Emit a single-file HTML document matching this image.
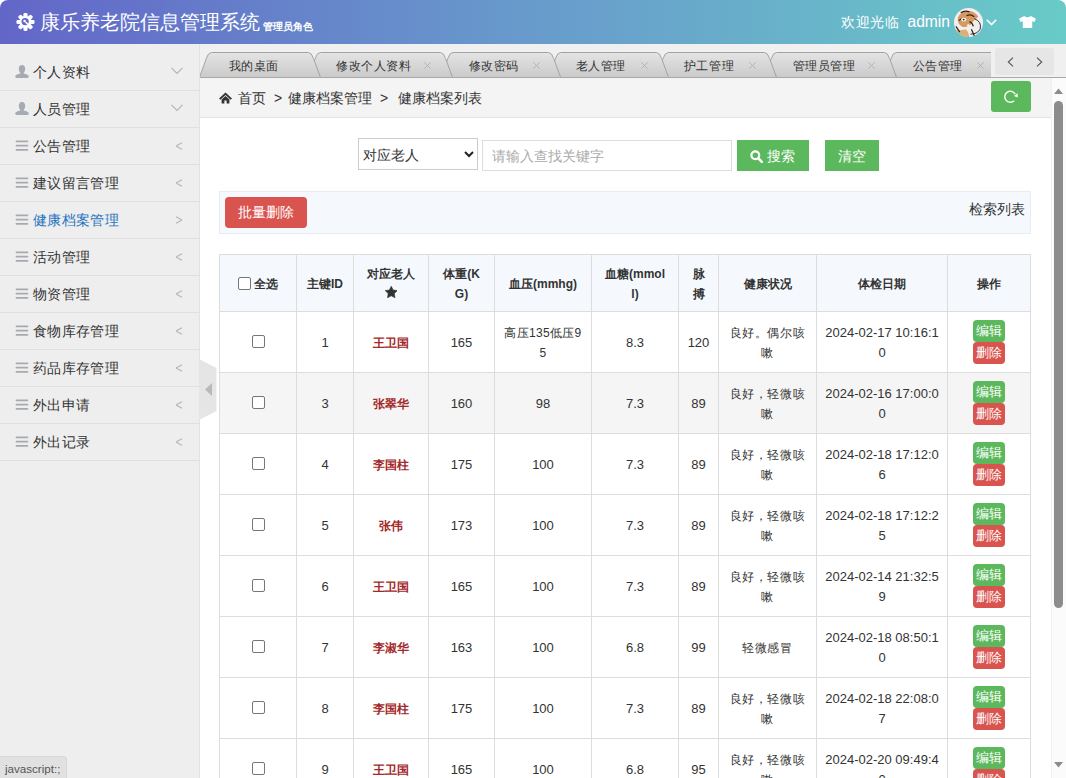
<!DOCTYPE html>
<html><head><meta charset="utf-8">
<style>
*{box-sizing:border-box;margin:0;padding:0}
html,body{width:1066px;height:778px;overflow:hidden;background:#fff;font-family:"Liberation Sans",sans-serif;color:#333;font-size:14px}
#hd{position:absolute;left:0;top:0;width:1066px;height:44px;border-radius:8px 8px 0 0;background:linear-gradient(90deg,#6366c8 0%,#689bcc 50%,#68cbc7 100%);color:#fff}
#hd .logo{position:absolute;left:16px;top:12px;width:19px;height:20px}
#hd .title{position:absolute;left:40px;top:9px;font-size:20px;line-height:26px;white-space:nowrap}
#hd .title small{font-size:10px;font-weight:bold;margin-left:3px;position:relative;top:1px}
#hd .welcome{position:absolute;left:841px;top:13px;font-size:14px;letter-spacing:0.6px;line-height:18px;white-space:nowrap}
#hd .uname{position:absolute;left:907.5px;top:12px;font-size:15.6px;line-height:20px}
#hd .avatar{position:absolute;left:954px;top:8px;width:30px;height:30px}
#hd .caret{position:absolute;left:986px;top:19px;width:11px;height:7px}
#hd .shirt{position:absolute;left:1019px;top:16px;width:17px;height:12px}

#sb{position:absolute;left:0;top:44px;width:200px;height:734px;background:#eeeeee;border-right:1px solid #e2e2e2}
#sb ul{list-style:none;position:absolute;left:0;top:10px;width:199px}
#sb li{position:relative;height:37px;border-bottom:1px solid #e0e0e0;font-size:14px;letter-spacing:0.35px;line-height:36px;color:#333;padding-left:33px;white-space:nowrap}
#sb li.on{color:#1e73be}
#sb li svg{position:absolute}
#sb li .ic{left:15px;top:11px;width:14px;height:14px}
#sb li .ic.u{top:11px}
#sb li .ar{left:171px;top:13px;width:12px;height:8px}
#sb li .lt{left:175px;top:14px;width:8px;height:8px}

#handle{position:absolute;z-index:10;left:199px;top:359px;width:18px;height:61px}

#tabs{position:absolute;left:200px;top:44px;width:866px;height:34px;background:#f0f0f0}
#tabs svg.bar{position:absolute;left:0;top:0}
.tt{position:absolute;top:13px;font-size:12.25px;letter-spacing:0.55px;line-height:18px;color:#333;white-space:nowrap}
.tx{position:absolute;top:18px;width:7px;height:7px}
#tabnav{position:absolute;left:795px;top:4px;width:59px;height:27px;background:#e6e6e6;border-radius:3px}

#frame{position:absolute;left:200px;top:78px;width:866px;height:700px;background:#fff;overflow:hidden}
#crumb{position:absolute;left:0;top:0;width:851px;height:40px;background:#f4f4f4;border-bottom:1px solid #e4e4e4;font-size:14px;line-height:18px;color:#333;white-space:nowrap}
#crumb .home{position:absolute;left:19px;top:14px;width:13px;height:12px}
#crumb span{position:absolute;top:11px}
#refresh{position:absolute;left:791px;top:3px;width:40px;height:31px;background:#5cb85c;border-radius:3px}
#refresh svg{position:absolute;left:12px;top:8px}
#scroll{position:absolute;left:851px;top:0;width:15px;height:700px;background:#fbfbfb;border-left:1px solid #f0f0f0}
#scroll .up{position:absolute;left:2px;top:10px}
#scroll .dn{position:absolute;left:2px;top:684px}
#scroll .th{position:absolute;left:2px;top:23px;width:9px;height:507px;background:#8c8c8c;border-radius:5px}

#sel{position:absolute;left:158px;top:60px;width:120px;height:32px;border:1px solid #ccc;background:#fff;font-size:14px;line-height:18px;color:#333}
#sel span{position:absolute;left:4px;top:7px}
#sel svg{position:absolute;left:105px;top:12px}
#inp{position:absolute;left:282px;top:62px;width:250px;height:31px;border:1px solid #ddd;background:#fff;font-size:14px;line-height:18px;color:#aaa}
#inp span{position:absolute;left:9px;top:6px}
.gbtn{position:absolute;top:62px;height:31px;background:#5cb85c;color:#fff;font-size:14px;line-height:18px}
.gbtn span{position:absolute;top:7px}
#sbtn{left:537px;width:72px}
#cbtn{left:625px;width:54px}

#bar{position:absolute;left:19px;top:113px;width:812px;height:43px;background:#f5f9fd;border:1px solid #e6ecf1}
#bdel{position:absolute;left:5px;top:5px;width:82px;height:31px;background:#d9534f;border-radius:4px;color:#fff;font-size:14px;line-height:18px}
#bdel span{position:absolute;left:13px;top:6px}
#bar .right{position:absolute;left:749px;top:8px;font-size:14px;line-height:18px;color:#333}

table{position:absolute;left:19px;top:176px;width:811px;border-collapse:collapse;table-layout:fixed;font-size:12px;color:#333}
th,td{border:1px solid #ddd;text-align:center;vertical-align:middle;padding:0 2px;line-height:20px;white-space:nowrap}
th{height:57px;background:#f5f9fd;font-weight:bold;padding-top:2px}
td{height:61px;font-size:13px;padding-top:2px}
td.zh{font-size:12px;letter-spacing:0.65px}
tr.hv td{background:#f5f5f5}
td.nm{color:#a3292b;font-weight:bold;font-size:12.4px}
i.cb{display:inline-block;width:13px;height:13px;border:1px solid #767676;border-radius:2px;background:#fff;vertical-align:middle;position:relative;top:-2px}
th i.cb{top:-1px;margin-right:3px}
b.be,b.bd{display:block;width:32px;height:22px;margin:0 auto;border-radius:4px;color:#fff;font-size:12.5px;line-height:22px;font-weight:normal;position:relative;left:0;top:-1px}
b.be{background:#5cb85c;margin-top:0}
b.bd{background:#d9534f;margin-top:0}
.star{display:block;margin:2px auto 6px;width:12.5px;height:12px}

#status{position:absolute;left:0;top:756px;width:67px;height:22px;background:#e1e1e1;border-top:1px solid #d8d8d8;border-right:1px solid #d8d8d8;border-radius:0 4px 0 0;font-size:11.6px;line-height:18px;color:#555;padding-left:5px;padding-top:3px}
</style></head><body>

<div id="hd">
  <svg class="logo" viewBox="0 0 20 20"><g fill="#fff"><g transform="translate(10 10)">
   <rect x="-2.2" y="-9.5" width="4.4" height="5" rx="1.5"/>
   <rect x="-2.2" y="-9.5" width="4.4" height="5" rx="1.5" transform="rotate(45)"/>
   <rect x="-2.2" y="-9.5" width="4.4" height="5" rx="1.5" transform="rotate(90)"/>
   <rect x="-2.2" y="-9.5" width="4.4" height="5" rx="1.5" transform="rotate(135)"/>
   <rect x="-2.2" y="-9.5" width="4.4" height="5" rx="1.5" transform="rotate(180)"/>
   <rect x="-2.2" y="-9.5" width="4.4" height="5" rx="1.5" transform="rotate(225)"/>
   <rect x="-2.2" y="-9.5" width="4.4" height="5" rx="1.5" transform="rotate(270)"/>
   <rect x="-2.2" y="-9.5" width="4.4" height="5" rx="1.5" transform="rotate(315)"/>
   <circle r="6.3"/></g>
   <circle cx="9.6" cy="9.6" r="3.8" fill="#6466c8"/><circle cx="9" cy="9" r="1.3" fill="#fff"/><path d="M10 10 L14 14" stroke="#fff" stroke-width="1.6"/></g></svg>
  <div class="title">康乐养老院信息管理系统<small>管理员角色</small></div>
  <div class="welcome">欢迎光临</div>
  <div class="uname">admin</div>
  <svg class="avatar" viewBox="0 0 31 31"><defs><clipPath id="av"><circle cx="15" cy="15" r="15"/></clipPath></defs>
   <g clip-path="url(#av)"><rect width="31" height="31" fill="#f1eef0"/>
   <path d="M4 10 Q7 3 14 3 Q22 3 25 9 Q21 12 18 16 Q14 21 8 19 Q3 16 4 10Z" fill="#d49a62"/>
   <path d="M0 22 Q6 24 12 22 Q15 24 16 31 H0Z" fill="#dcae78"/>
   <path d="M7 5 Q11 2 16 4 M13 8 Q17 6 21 9 M5 13 Q8 10 11 12 M16 14 Q19 15 20 19 M18 22 L22 31 M2 19 L6 25" stroke="#3c2414" stroke-width="1.3" fill="none"/>
   <path d="M21 11 Q29 14 27 22 Q24 27 17 27" stroke="#2a2a2a" stroke-width="1" fill="none"/>
   <ellipse cx="10" cy="12" rx="2.6" ry="2" fill="#fff"/><circle cx="10" cy="12" r="1" fill="#222"/>
   <path d="M14 17 Q17 20 15 24" stroke="#f6efe6" stroke-width="2.2" fill="none"/>
   </g></svg>
  <svg class="caret" viewBox="0 0 11 7"><path d="M0.8 0.8 L5.5 5.6 L10.2 0.8" stroke="#fff" stroke-width="1.6" fill="none"/></svg>
  <svg class="shirt" viewBox="0 0 17 12"><path d="M0 2.8 L5.2 0 Q8.5 2.6 11.8 0 L17 2.8 L15.4 6 L13.2 5.2 L13.2 12 L3.8 12 L3.8 5.2 L1.6 6 Z" fill="#fff"/></svg>
</div>

<div id="sb">
  <ul>
    <li><svg class="ic" viewBox="0 0 14 14"><path d="M7 0 C9.3 0 10.2 1.8 10.2 4 C10.2 5.9 9.3 7.2 8.7 7.7 L8.7 8.4 C11.5 8.9 13.8 9.9 13.8 11.6 Q13.8 13 12.4 13 L1.6 13 Q0.2 13 0.2 11.6 C0.2 9.9 2.5 8.9 5.3 8.4 L5.3 7.7 C4.7 7.2 3.8 5.9 3.8 4 C3.8 1.8 4.7 0 7 0Z" fill="#a5aab3"/></svg><svg class="ar" viewBox="0 0 12 8"><path d="M0.5 0.8 L6 6.5 L11.5 0.8" stroke="#b5b5b5" stroke-width="1.2" fill="none"/></svg>个人资料</li>
    <li><svg class="ic" viewBox="0 0 14 14"><path d="M7 0 C9.3 0 10.2 1.8 10.2 4 C10.2 5.9 9.3 7.2 8.7 7.7 L8.7 8.4 C11.5 8.9 13.8 9.9 13.8 11.6 Q13.8 13 12.4 13 L1.6 13 Q0.2 13 0.2 11.6 C0.2 9.9 2.5 8.9 5.3 8.4 L5.3 7.7 C4.7 7.2 3.8 5.9 3.8 4 C3.8 1.8 4.7 0 7 0Z" fill="#a5aab3"/></svg><svg class="ar" viewBox="0 0 12 8"><path d="M0.5 0.8 L6 6.5 L11.5 0.8" stroke="#b5b5b5" stroke-width="1.2" fill="none"/></svg>人员管理</li>
    <li><svg class="ic" viewBox="0 0 14 14"><rect x="0.6" y="1.6" width="12.7" height="1.75" rx="0.8" fill="#a6aaaf"/><rect x="0.6" y="5.8" width="12.7" height="1.75" rx="0.8" fill="#a6aaaf"/><rect x="0.6" y="10" width="12.7" height="1.75" rx="0.8" fill="#a6aaaf"/></svg><svg class="lt" viewBox="0 0 8 8"><path d="M1 4 L7 0.8 M1 4 L7 7.2" stroke="#b5b5b5" stroke-width="1.1" fill="none"/></svg>公告管理</li>
    <li><svg class="ic" viewBox="0 0 14 14"><rect x="0.6" y="1.6" width="12.7" height="1.75" rx="0.8" fill="#a6aaaf"/><rect x="0.6" y="5.8" width="12.7" height="1.75" rx="0.8" fill="#a6aaaf"/><rect x="0.6" y="10" width="12.7" height="1.75" rx="0.8" fill="#a6aaaf"/></svg><svg class="lt" viewBox="0 0 8 8"><path d="M1 4 L7 0.8 M1 4 L7 7.2" stroke="#b5b5b5" stroke-width="1.1" fill="none"/></svg>建议留言管理</li>
    <li class="on"><svg class="ic" viewBox="0 0 14 14"><rect x="0.6" y="1.6" width="12.7" height="1.75" rx="0.8" fill="#a6aaaf"/><rect x="0.6" y="5.8" width="12.7" height="1.75" rx="0.8" fill="#a6aaaf"/><rect x="0.6" y="10" width="12.7" height="1.75" rx="0.8" fill="#a6aaaf"/></svg><svg class="lt" viewBox="0 0 8 8"><path d="M7 4 L1 0.8 M7 4 L1 7.2" stroke="#b5b5b5" stroke-width="1.1" fill="none"/></svg>健康档案管理</li>
    <li><svg class="ic" viewBox="0 0 14 14"><rect x="0.6" y="1.6" width="12.7" height="1.75" rx="0.8" fill="#a6aaaf"/><rect x="0.6" y="5.8" width="12.7" height="1.75" rx="0.8" fill="#a6aaaf"/><rect x="0.6" y="10" width="12.7" height="1.75" rx="0.8" fill="#a6aaaf"/></svg><svg class="lt" viewBox="0 0 8 8"><path d="M1 4 L7 0.8 M1 4 L7 7.2" stroke="#b5b5b5" stroke-width="1.1" fill="none"/></svg>活动管理</li>
    <li><svg class="ic" viewBox="0 0 14 14"><rect x="0.6" y="1.6" width="12.7" height="1.75" rx="0.8" fill="#a6aaaf"/><rect x="0.6" y="5.8" width="12.7" height="1.75" rx="0.8" fill="#a6aaaf"/><rect x="0.6" y="10" width="12.7" height="1.75" rx="0.8" fill="#a6aaaf"/></svg><svg class="lt" viewBox="0 0 8 8"><path d="M1 4 L7 0.8 M1 4 L7 7.2" stroke="#b5b5b5" stroke-width="1.1" fill="none"/></svg>物资管理</li>
    <li><svg class="ic" viewBox="0 0 14 14"><rect x="0.6" y="1.6" width="12.7" height="1.75" rx="0.8" fill="#a6aaaf"/><rect x="0.6" y="5.8" width="12.7" height="1.75" rx="0.8" fill="#a6aaaf"/><rect x="0.6" y="10" width="12.7" height="1.75" rx="0.8" fill="#a6aaaf"/></svg><svg class="lt" viewBox="0 0 8 8"><path d="M1 4 L7 0.8 M1 4 L7 7.2" stroke="#b5b5b5" stroke-width="1.1" fill="none"/></svg>食物库存管理</li>
    <li><svg class="ic" viewBox="0 0 14 14"><rect x="0.6" y="1.6" width="12.7" height="1.75" rx="0.8" fill="#a6aaaf"/><rect x="0.6" y="5.8" width="12.7" height="1.75" rx="0.8" fill="#a6aaaf"/><rect x="0.6" y="10" width="12.7" height="1.75" rx="0.8" fill="#a6aaaf"/></svg><svg class="lt" viewBox="0 0 8 8"><path d="M1 4 L7 0.8 M1 4 L7 7.2" stroke="#b5b5b5" stroke-width="1.1" fill="none"/></svg>药品库存管理</li>
    <li><svg class="ic" viewBox="0 0 14 14"><rect x="0.6" y="1.6" width="12.7" height="1.75" rx="0.8" fill="#a6aaaf"/><rect x="0.6" y="5.8" width="12.7" height="1.75" rx="0.8" fill="#a6aaaf"/><rect x="0.6" y="10" width="12.7" height="1.75" rx="0.8" fill="#a6aaaf"/></svg><svg class="lt" viewBox="0 0 8 8"><path d="M1 4 L7 0.8 M1 4 L7 7.2" stroke="#b5b5b5" stroke-width="1.1" fill="none"/></svg>外出申请</li>
    <li><svg class="ic" viewBox="0 0 14 14"><rect x="0.6" y="1.6" width="12.7" height="1.75" rx="0.8" fill="#a6aaaf"/><rect x="0.6" y="5.8" width="12.7" height="1.75" rx="0.8" fill="#a6aaaf"/><rect x="0.6" y="10" width="12.7" height="1.75" rx="0.8" fill="#a6aaaf"/></svg><svg class="lt" viewBox="0 0 8 8"><path d="M1 4 L7 0.8 M1 4 L7 7.2" stroke="#b5b5b5" stroke-width="1.1" fill="none"/></svg>外出记录</li>
  </ul>
</div>
<svg id="handle" viewBox="0 0 18 61"><path d="M0 0 L17.5 9 L17.5 52 L0 61Z" fill="#e5e5e5"/><path d="M13 24 L6 30.5 L13 37Z" fill="#b9b9b9"/></svg>

<div id="tabs">
  <svg class="bar" width="866" height="34" viewBox="0 0 866 34">
   <defs><linearGradient id="tg" x1="0" y1="0" x2="0" y2="1"><stop offset="0" stop-color="#e4e4e4"/><stop offset="1" stop-color="#cacaca"/></linearGradient>
   <clipPath id="tc"><rect x="0" y="0" width="791" height="34"/></clipPath></defs>
   <g clip-path="url(#tc)" fill="url(#tg)" stroke="#a3a3a3" stroke-width="1">
   <path d="M684.2 33.5 L691.1 14.5 Q692.9 8.5 696.3 8.5 L807.8 8.5 Q811.2 8.5 813.0 14.5 L820.0 33.5"/>
   <path d="M564.4 33.5 L571.3 14.5 Q573.1 8.5 576.5 8.5 L684.4 8.5 Q687.8 8.5 689.6 14.5 L696.6 33.5"/>
   <path d="M456.2 33.5 L463.1 14.5 Q464.9 8.5 468.3 8.5 L564.4 8.5 Q567.8 8.5 569.6 14.5 L576.6 33.5"/>
   <path d="M348.6 33.5 L355.5 14.5 Q357.3 8.5 360.7 8.5 L456.4 8.5 Q459.8 8.5 461.6 14.5 L468.6 33.5"/>
   <path d="M240.9 33.5 L247.8 14.5 Q249.6 8.5 253.0 8.5 L348.5 8.5 Q351.9 8.5 353.7 14.5 L360.7 33.5"/>
   <path d="M108.3 33.5 L115.2 14.5 Q117.0 8.5 120.4 8.5 L240.4 8.5 Q243.8 8.5 245.6 14.5 L252.6 33.5"/>
   <path d="M-0.6 33.5 L6.3 14.5 Q8.1 8.5 11.5 8.5 L108.3 8.5 Q111.7 8.5 113.5 14.5 L120.5 33.5"/>
   </g>
   <rect x="0" y="33" width="866" height="1" fill="#a9a9a9"/>
  </svg>
  <div class="tt" style="left:28.5px">我的桌面</div>
  <div class="tt" style="left:136.1px">修改个人资料</div>
  <svg class="tx" style="left:224.0px" viewBox="0 0 7 7"><path d="M0.3 0.3 L6.7 6.7 M6.7 0.3 L0.3 6.7" stroke="#b3b3b3" stroke-width="1"/></svg>
  <div class="tt" style="left:268.5px">修改密码</div>
  <svg class="tx" style="left:333.0px" viewBox="0 0 7 7"><path d="M0.3 0.3 L6.7 6.7 M6.7 0.3 L0.3 6.7" stroke="#b3b3b3" stroke-width="1"/></svg>
  <div class="tt" style="left:375.5px">老人管理</div>
  <svg class="tx" style="left:440.7px" viewBox="0 0 7 7"><path d="M0.3 0.3 L6.7 6.7 M6.7 0.3 L0.3 6.7" stroke="#b3b3b3" stroke-width="1"/></svg>
  <div class="tt" style="left:483.9px">护工管理</div>
  <svg class="tx" style="left:548.8px" viewBox="0 0 7 7"><path d="M0.3 0.3 L6.7 6.7 M6.7 0.3 L0.3 6.7" stroke="#b3b3b3" stroke-width="1"/></svg>
  <div class="tt" style="left:592.5px">管理员管理</div>
  <svg class="tx" style="left:668.0px" viewBox="0 0 7 7"><path d="M0.3 0.3 L6.7 6.7 M6.7 0.3 L0.3 6.7" stroke="#b3b3b3" stroke-width="1"/></svg>
  <div class="tt" style="left:712.5px">公告管理</div>
  <svg class="tx" style="left:777.0px" viewBox="0 0 7 7"><path d="M0.3 0.3 L6.7 6.7 M6.7 0.3 L0.3 6.7" stroke="#b3b3b3" stroke-width="1"/></svg>
  <div id="tabnav"><svg style="position:absolute;left:12px;top:9px" width="7" height="10" viewBox="0 0 7 10"><path d="M6 0.7 L1.3 5 L6 9.3" stroke="#555" stroke-width="1.1" fill="none"/></svg><svg style="position:absolute;left:41px;top:9px" width="7" height="10" viewBox="0 0 7 10"><path d="M1 0.7 L5.7 5 L1 9.3" stroke="#555" stroke-width="1.1" fill="none"/></svg></div>
</div>

<div id="frame">
  <div id="crumb">
    <svg class="home" viewBox="0 0 13 11"><path d="M6.5 0 L13 6 L11.6 7.3 L6.5 2.6 L1.4 7.3 L0 6Z M2.6 7 L6.5 3.5 L10.4 7 L10.4 11 L7.6 11 L7.6 8 L5.4 8 L5.4 11 L2.6 11Z" fill="#333"/></svg>
    <span style="left:38px">首页</span>
    <span style="left:74px">&gt;</span>
    <span style="left:88px">健康档案管理</span>
    <span style="left:180px">&gt;</span>
    <span style="left:198px">健康档案列表</span>
    <div id="refresh"><svg width="16" height="14" viewBox="0 0 16 14"><path d="M11.19 11.69 A5.5 5.5 0 1 1 12.06 5.05" stroke="#fff" stroke-width="1.4" fill="none"/><path d="M10.9 6.9 L14.6 4.2 L14.8 8.4Z" fill="#fff"/></svg></div>
  </div>

  <div id="sel"><span>对应老人</span><svg width="10" height="7" viewBox="0 0 10 7"><path d="M1 1 L5 5 L9 1" stroke="#222" stroke-width="2" fill="none"/></svg></div>
  <div id="inp"><span>请输入查找关键字</span></div>
  <div id="sbtn" class="gbtn"><svg style="position:absolute;left:13px;top:10px" width="13" height="13" viewBox="0 0 13 13"><circle cx="5.3" cy="5.3" r="3.9" stroke="#fff" stroke-width="2.2" fill="none"/><path d="M8.2 8.2 L11.8 11.8" stroke="#fff" stroke-width="2.6" stroke-linecap="round"/></svg><span style="left:30px">搜索</span></div>
  <div id="cbtn" class="gbtn"><span style="left:13px">清空</span></div>

  <div id="bar"><div id="bdel"><span>批量删除</span></div><div class="right">检索列表</div></div>

  <table>
   <colgroup><col style="width:77px"><col style="width:57px"><col style="width:75px"><col style="width:66px"><col style="width:97px"><col style="width:87px"><col style="width:40px"><col style="width:98px"><col style="width:131px"><col style="width:83px"></colgroup>
   <tr><th><i class="cb"></i>全选</th><th>主键ID</th><th>对应老人<svg class="star" viewBox="0 0 12.5 12"><path d="M6.25 0.20 L8.13 4.01 L12.34 4.62 L9.29 7.59 L10.01 11.78 L6.25 9.80 L2.49 11.78 L3.21 7.59 L0.16 4.62 L4.37 4.01Z" fill="#333" stroke="#333" stroke-width="0.6" stroke-linejoin="round"/></svg></th><th>体重(K<br>G)</th><th>血压(mmhg)</th><th>血糖(mmol<br>l)</th><th>脉<br>搏</th><th>健康状况</th><th>体检日期</th><th>操作</th></tr>
   <tr><td><i class="cb"></i></td><td>1</td><td class="nm">王卫国</td><td>165</td><td class="zh" style="letter-spacing:0.3px">高压135低压9<br>5</td><td>8.3</td><td>120</td><td class="zh">良好。偶尔咳<br>嗽</td><td>2024-02-17 10:16:1<br>0</td><td><b class="be">编辑</b><b class="bd">删除</b></td></tr>
<tr class="hv"><td><i class="cb"></i></td><td>3</td><td class="nm">张翠华</td><td>160</td><td>98</td><td>7.3</td><td>89</td><td class="zh">良好，轻微咳<br>嗽</td><td>2024-02-16 17:00:0<br>0</td><td><b class="be">编辑</b><b class="bd">删除</b></td></tr>
<tr><td><i class="cb"></i></td><td>4</td><td class="nm">李国柱</td><td>175</td><td>100</td><td>7.3</td><td>89</td><td class="zh">良好，轻微咳<br>嗽</td><td>2024-02-18 17:12:0<br>6</td><td><b class="be">编辑</b><b class="bd">删除</b></td></tr>
<tr><td><i class="cb"></i></td><td>5</td><td class="nm">张伟</td><td>173</td><td>100</td><td>7.3</td><td>89</td><td class="zh">良好，轻微咳<br>嗽</td><td>2024-02-18 17:12:2<br>5</td><td><b class="be">编辑</b><b class="bd">删除</b></td></tr>
<tr><td><i class="cb"></i></td><td>6</td><td class="nm">王卫国</td><td>165</td><td>100</td><td>7.3</td><td>89</td><td class="zh">良好，轻微咳<br>嗽</td><td>2024-02-14 21:32:5<br>9</td><td><b class="be">编辑</b><b class="bd">删除</b></td></tr>
<tr><td><i class="cb"></i></td><td>7</td><td class="nm">李淑华</td><td>163</td><td>100</td><td>6.8</td><td>99</td><td class="zh">轻微感冒</td><td>2024-02-18 08:50:1<br>0</td><td><b class="be">编辑</b><b class="bd">删除</b></td></tr>
<tr><td><i class="cb"></i></td><td>8</td><td class="nm">李国柱</td><td>175</td><td>100</td><td>7.3</td><td>89</td><td class="zh">良好，轻微咳<br>嗽</td><td>2024-02-18 22:08:0<br>7</td><td><b class="be">编辑</b><b class="bd">删除</b></td></tr>
<tr><td><i class="cb"></i></td><td>9</td><td class="nm">王卫国</td><td>165</td><td>100</td><td>6.8</td><td>95</td><td class="zh">良好，轻微咳<br>嗽</td><td>2024-02-20 09:49:4<br>0</td><td><b class="be">编辑</b><b class="bd">删除</b></td></tr>
  </table>
  <div id="scroll"><svg class="up" width="9" height="6" viewBox="0 0 9 6"><path d="M0 6 L4.5 0.5 L9 6Z" fill="#8c8c8c"/></svg><div class="th"></div><svg class="dn" width="9" height="6" viewBox="0 0 9 6"><path d="M0 0 L4.5 5.5 L9 0Z" fill="#8c8c8c"/></svg></div>
</div>

<div id="status">javascript:;</div>
</body></html>
